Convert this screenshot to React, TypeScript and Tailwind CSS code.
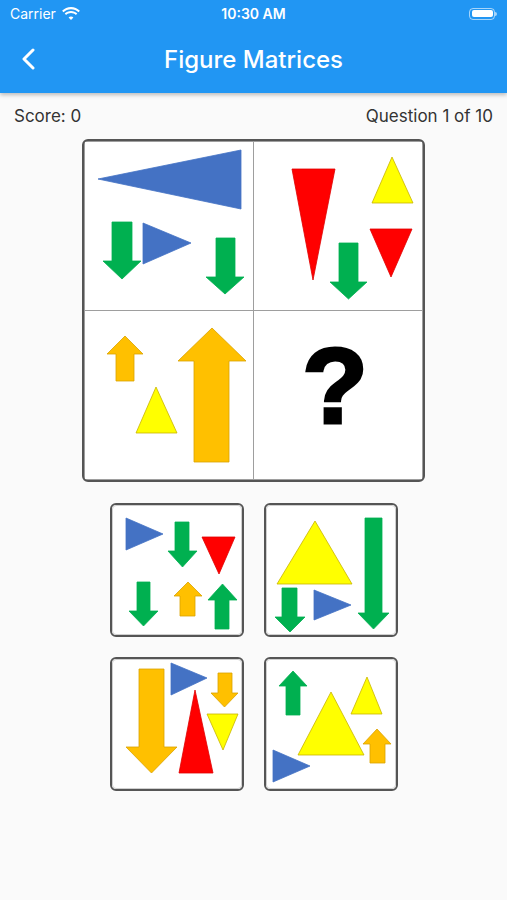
import type { ReactNode } from 'react'

const BLUE = '#4472C4'
const GREEN = '#00B050'
const RED = '#FF0000'
const YELLOW = '#FFFF00'
const ORANGE = '#FFC000'

// down arrow: shaft x1..x2 from top to head base hb, head xl..xr, tip y
function down(x1: number, x2: number, top: number, hb: number, xl: number, xr: number, tip: number) {
  const xc = (xl + xr) / 2
  return `${x1},${top} ${x2},${top} ${x2},${hb} ${xr},${hb} ${xc},${tip} ${xl},${hb} ${x1},${hb}`
}

// up arrow: apex y, head xl..xr at hb, shaft x1..x2 down to bottom
function up(apex: number, xl: number, xr: number, hb: number, x1: number, x2: number, bottom: number) {
  const xc = (xl + xr) / 2
  return `${xc},${apex} ${xr},${hb} ${x2},${hb} ${x2},${bottom} ${x1},${bottom} ${x1},${hb} ${xl},${hb}`
}

type Shape = { pts: string; fill: string }

const edge: Record<string, string> = {
  [BLUE]: BLUE,
  [GREEN]: GREEN,
  [RED]: '#e00000',
  [YELLOW]: '#c8b400',
  [ORANGE]: '#d9a200',
}

// svg drawn in page coordinates via viewBox offset
function Figure({ x, y, size, shapes }: { x: number; y: number; size: number; shapes: Shape[] }) {
  return (
    <svg width={size} height={size} viewBox={`${x} ${y} ${size} ${size}`} className="block">
      {shapes.map((s, i) => (
        <polygon key={i} points={s.pts} fill={s.fill} stroke={edge[s.fill]} strokeWidth={0.8} strokeLinejoin="round" />
      ))}
    </svg>
  )
}

const cellTL: Shape[] = [
  { pts: '99,179 242,150 242,209', fill: BLUE },
  { pts: down(113, 133, 222, 261, 104, 142, 279), fill: GREEN },
  { pts: '144,223 144,264 192,243', fill: BLUE },
  { pts: down(217, 236, 238, 277, 207, 245, 294), fill: GREEN },
]

const cellTR: Shape[] = [
  { pts: '293,169 336,169 314,280', fill: RED },
  { pts: '393,157 414,203 373,203', fill: YELLOW },
  { pts: '371,229 413,229 392,277', fill: RED },
  { pts: down(340, 359, 243, 282, 331, 368, 299), fill: GREEN },
]

const cellBL: Shape[] = [
  { pts: up(336, 108, 144, 354, 117, 135, 381), fill: ORANGE },
  { pts: '157,387 178,433 137,433', fill: YELLOW },
  { pts: up(328, 179, 247, 361, 195, 230, 462), fill: ORANGE },
]

const options: { x: number; y: number; shapes: Shape[] }[] = [
  {
    x: 112,
    y: 506,
    shapes: [
      { pts: '125,518 125,550 162,534', fill: BLUE },
      { pts: down(174, 188, 522, 551, 167, 196, 567), fill: GREEN },
      { pts: '201,537 234,537 218,574', fill: RED },
      { pts: down(136, 149, 582, 611, 128, 157, 626), fill: GREEN },
      { pts: up(582, 173, 201, 596, 179, 194, 616), fill: ORANGE },
      { pts: up(584, 207, 236, 600, 214, 228, 629), fill: GREEN },
    ],
  },
  {
    x: 267,
    y: 506,
    shapes: [
      { pts: '315,521 352,584 277,584', fill: YELLOW },
      { pts: down(282, 297, 588, 617, 275, 305, 632), fill: GREEN },
      { pts: '314,590 314,620 351,605', fill: BLUE },
      { pts: down(365, 382, 518, 613, 358, 389, 629), fill: GREEN },
    ],
  },
  {
    x: 112,
    y: 660,
    shapes: [
      { pts: down(138, 163, 669, 747, 125, 176, 773), fill: ORANGE },
      { pts: '170,663 170,695 206,678', fill: BLUE },
      { pts: '194,690 212,773 178,773', fill: RED },
      { pts: down(217, 231, 673, 693, 210, 237, 707), fill: ORANGE },
      { pts: '206,714 237,714 222,750', fill: YELLOW },
    ],
  },
  {
    x: 267,
    y: 660,
    shapes: [
      { pts: up(671, 279, 307, 686, 286, 300, 715), fill: GREEN },
      { pts: '367,677 382,714 351,714', fill: YELLOW },
      { pts: '331,692 364,755 298,755', fill: YELLOW },
      { pts: up(729, 363, 391, 744, 370, 385, 763), fill: ORANGE },
      { pts: '273,750 273,782 310,766', fill: BLUE },
    ],
  },
]

function Cell({ children }: { children: ReactNode }) {
  return <div className="w-[168px] h-[168px] bg-white">{children}</div>
}

function StatusBar() {
  return (
    <div className="h-[27px] flex items-center justify-between px-[10px] text-white">
      <div className="flex items-center gap-[6px] w-[120px]">
        <span className="text-[14px] leading-none">Carrier</span>
        <svg width="18" height="13" viewBox="0 0 18 13" fill="white">
          <path d="M9 2.2c2.9 0 5.5 1.1 7.5 3l1.4-1.5C15.5 1.4 12.4 0 9 0S2.5 1.4.1 3.7l1.4 1.5c2-1.9 4.6-3 7.5-3z" />
          <path d="M9 6c1.9 0 3.6.7 4.9 1.9l1.4-1.5C13.7 4.9 11.5 4 9 4S4.3 4.9 2.7 6.4l1.4 1.5C5.4 6.7 7.1 6 9 6z" />
          <path d="M9 9.5c.9 0 1.8.4 2.4 1L9 13l-2.4-2.5c.6-.6 1.5-1 2.4-1z" />
        </svg>
      </div>
      <span className="text-[14px] font-semibold leading-none">10:30 AM</span>
      <div className="w-[120px] flex justify-end">
        <div className="flex items-center">
          <div className="w-[26px] h-[12px] rounded-[4px] border border-white/60 p-[1.5px]">
            <div className="w-full h-full rounded-[2px] bg-white" />
          </div>
          <div className="w-[1.5px] h-[4px] rounded-r bg-white/60" />
        </div>
      </div>
    </div>
  )
}

export default function App() {
  return (
    <div className="min-h-[900px] bg-[#fafafa] font-['Inter',sans-serif]">
      <div className="bg-[#2196F3] shadow-[0_2px_4px_rgba(0,0,0,0.25)] relative z-10">
        <StatusBar />
        <div className="h-[66px] flex items-center relative">
          <svg width="16" height="22" viewBox="0 0 16 22" className="absolute left-[20px] top-[21px]">
            <path d="M13 2 4 11l9 9" fill="none" stroke="white" strokeWidth="3" strokeLinecap="round" strokeLinejoin="round" />
          </svg>
          <h1 className="flex-1 text-center text-white text-[24px] font-medium">Figure Matrices</h1>
        </div>
      </div>

      <div className="flex justify-between px-[14px] pt-[11px] text-[17px] leading-[24px] text-[#333]">
        <span>Score: 0</span>
        <span>Question 1 of 10</span>
      </div>

      <div className="mt-[11px] mx-auto w-[343px] h-[343px] border-2 border-[#555] rounded-[6px] bg-[#9e9e9e] p-px grid grid-cols-2 gap-px overflow-hidden">
        <Cell>
          <Figure x={86} y={142} size={168} shapes={cellTL} />
        </Cell>
        <Cell>
          <Figure x={255} y={142} size={168} shapes={cellTR} />
        </Cell>
        <Cell>
          <Figure x={86} y={311} size={168} shapes={cellBL} />
        </Cell>
        <Cell>
          <div className="w-full h-full flex items-center justify-center pb-[18px] pr-[6px]">
            <span className="font-['Liberation_Sans',sans-serif] font-bold text-[108px] leading-none text-black [-webkit-text-stroke:3px_black]">?</span>
          </div>
        </Cell>
      </div>

      <div className="mt-[21px] mx-auto w-[288px] grid grid-cols-2 gap-[20px]">
        {options.map((o, i) => (
          <div key={i} className="w-[134px] h-[134px] border-2 border-[#555] rounded-[6px] bg-white overflow-hidden">
            <div className="w-full h-full border border-[#cfcfcf] rounded-[4px]">
              <Figure x={o.x} y={o.y} size={128} shapes={o.shapes} />
            </div>
          </div>
        ))}
      </div>
    </div>
  )
}
